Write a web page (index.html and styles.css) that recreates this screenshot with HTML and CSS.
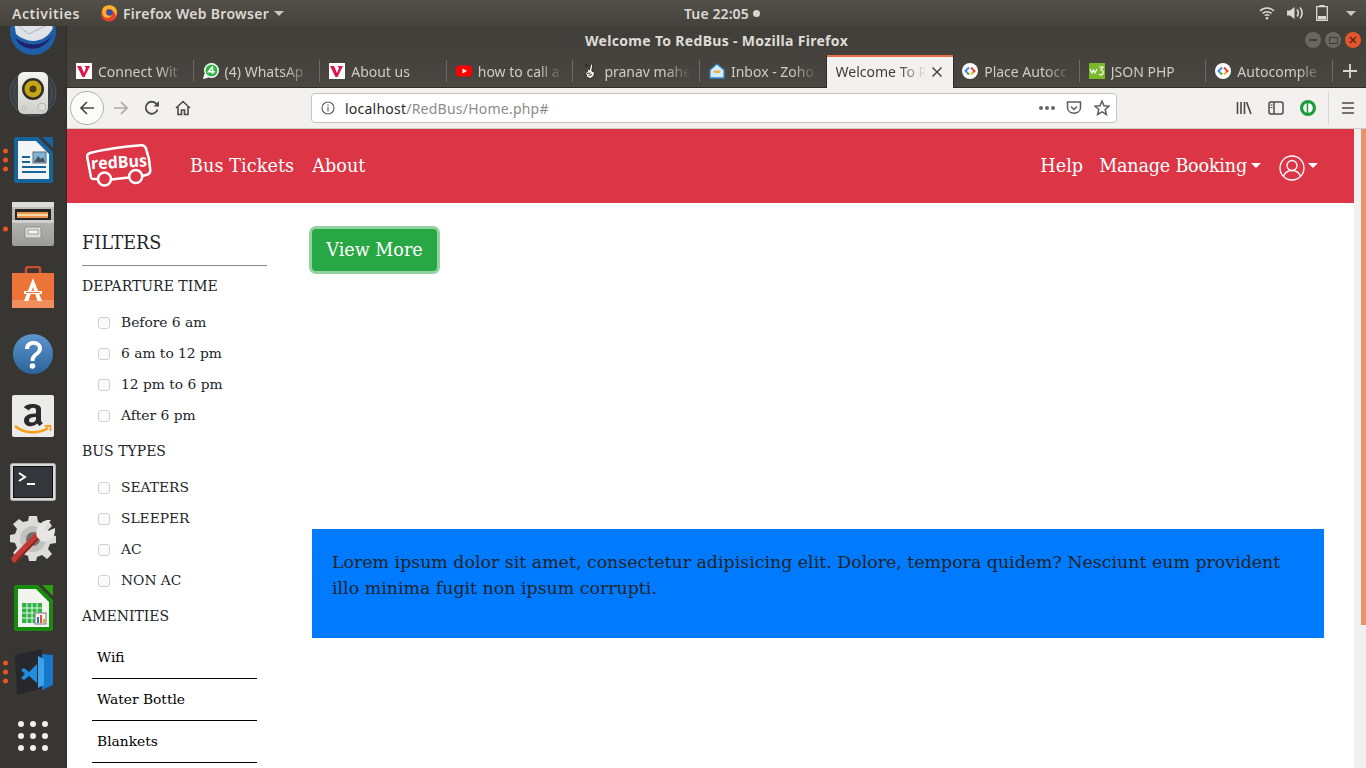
FILE: index.html
```html
<!DOCTYPE html>
<html lang="en">
<head>
<meta charset="utf-8">
<title>Welcome To RedBus</title>
<link rel="stylesheet" href="styles.css">
</head>
<body>
<header class="topbar">
  <div class="top-left">
    <span class="activities">Activities</span>
    <span class="app-menu">
      <svg class="ff" viewBox="0 0 18 18" width="18" height="18"><circle cx="9" cy="9.500" r="8" fill="#e8432f"/><path d="M3 4C5 1 11 0 14.500 3 17.500 5.500 17.500 10 16 12 15 8 12 5 9 5.500L7 4 8 6C6 6 5 7.500 6 9 7 11 11 11 12 9 12.500 12.500 9 15 5.500 13.500 2 12 1.500 7 3 4Z" fill="#ffb226"/><circle cx="9.500" cy="8.500" r="3.200" fill="#3b4ba8"/></svg>
      <span>Firefox Web Browser</span>
      <i class="caret-grey"></i>
    </span>
  </div>
  <div class="clock">Tue 22:05<i class="clock-dot"></i></div>
  <div class="top-right">
    <svg viewBox="0 0 16 14" width="16" height="14" fill="none" stroke="#dcd9d4" stroke-width="1.500"><path d="M1 5C5 1 11 1 15 5M3.500 7.500C6 5 10 5 12.500 7.500M5.800 9.800C7 8.700 9 8.700 10.200 9.800"/><circle cx="8" cy="12.200" r="1.300" fill="#dcd9d4" stroke="none"/></svg>
    <svg viewBox="0 0 17 14" width="17" height="14" fill="#dcd9d4"><path d="M0 4.500H3L7.500 1V13L3 9.500H0Z"/><path d="M10 3.500C11.500 5.500 11.500 8.500 10 10.500M13 1.500C15.700 4.500 15.700 9.500 13 12.500" fill="none" stroke="#dcd9d4" stroke-width="1.600"/></svg>
    <svg viewBox="0 0 12 16" width="12" height="16" fill="none" stroke="#dcd9d4" stroke-width="1.300"><path d="M4 1.500V.6H8V1.500M.7 1.700H11.300V15.300H.7Z"/><rect x="2" y="11" width="8" height="3.500" fill="#dcd9d4" stroke="none"/></svg>
    <i class="caret-grey caret-sys"></i>
  </div>
</header>

<div class="desktop">
  <nav class="dock">
    <div class="slot slot-first">
      <svg viewBox="0 0 48 48" width="48" height="48"><circle cx="24" cy="24" r="23" fill="#1f5fa8"/><path d="M6 30C14 44 34 46 44 26 36 38 20 40 6 30Z" fill="#20216b"/><path d="M4 8H38L44 20C36 36 18 36 7 26Z" fill="#dfe2e7"/><path d="M4 14L20 26 40 16" fill="none" stroke="#aeb3bb"/></svg>
    </div>
    <div class="slot">
      <svg viewBox="0 0 48 48" width="48" height="48"><defs><linearGradient id="spk" x1="0" y1="0" x2="0" y2="1"><stop offset="0" stop-color="#f4f4f0"/><stop offset="1" stop-color="#cfcfca"/></linearGradient></defs><circle cx="24" cy="21" r="23" fill="#3b3f44" stroke="#4a5560"/><circle cx="24" cy="21" r="19" fill="none" stroke="#4a5560"/><rect x="9" y="0" width="30" height="42" rx="6" fill="url(#spk)"/><circle cx="24" cy="17" r="11" fill="#2f2e2a"/><circle cx="24" cy="17" r="8.500" fill="#c6a516"/><circle cx="24" cy="17" r="3.500" fill="#47400f"/><circle cx="33" cy="35" r="4" fill="#dcdcd8" stroke="#b9b9b4"/><circle cx="15" cy="36" r="2" fill="#d5d5d0" stroke="#bbb"/></svg>
    </div>
    <div class="slot">
      <i class="pips"><b></b><b></b><b></b></i>
      <svg viewBox="0 0 41 48" width="41" height="48"><path d="M3 1H25L40 16V45A2 2 0 0 1 38 47H3A2 2 0 0 1 1 45V3A2 2 0 0 1 3 1Z" fill="#18639b"/><path d="M5 5H23L36 18V43H5Z" fill="#f2f4f5"/><path d="M29 1H40V12Z" fill="#18639b"/><path d="M9 20H17V22H9ZM9 25H17V27H9ZM9 30H33V32H9ZM9 35H33V37H9Z" fill="#18639b"/><rect x="20" y="16" width="13" height="11" fill="#7fb4d8" stroke="#5b6d78"/><path d="M21 26L25 20 28 23 30 21 32 26Z" fill="#48525a"/></svg>
    </div>
    <div class="slot">
      <i class="pips pips-one"><b></b></i>
      <svg viewBox="0 0 42 44" width="42" height="44"><defs><linearGradient id="cab" x1="0" y1="0" x2="0" y2="1"><stop offset="0" stop-color="#c3c3c1"/><stop offset="1" stop-color="#9c9c9a"/></linearGradient></defs><rect x="0" y="0" width="42" height="44" rx="2" fill="url(#cab)"/><rect x="0" y="0" width="42" height="5" fill="#dcdcda"/><rect x="3" y="7" width="36" height="12" fill="#252524"/><rect x="5" y="10" width="31" height="6" fill="#e8944f"/><rect x="5" y="12" width="31" height="2" fill="#f6d9a5"/><rect x="0" y="18" width="42" height="3" fill="#d0d0ce"/><rect x="13" y="25" width="16" height="11" rx="1" fill="#dcdcda" stroke="#8f8f8d"/><rect x="16" y="28" width="10" height="4" fill="#f4f4f3" stroke="#6f6f6d" stroke-width=".6"/></svg>
    </div>
    <div class="slot">
      <svg viewBox="0 0 42 44" width="42" height="44"><path d="M14 9V3A2 2 0 0 1 16 1H26A2 2 0 0 1 28 3V9" fill="none" stroke="#c9502a" stroke-width="2.500"/><path d="M0 7H42V42H0Z" fill="#ed7439"/><path d="M0 34H42V42H0Z" fill="#f28e5b"/><path d="M21 12L12 35H16.500L21 21 25.500 35H30Z" fill="#fff"/><rect x="12" y="25" width="18" height="3" fill="#fff"/><rect x="14" y="26" width="14" height="1" fill="#ed7439"/></svg>
    </div>
    <div class="slot slot-down">
      <svg viewBox="0 0 42 42" width="42" height="42"><defs><linearGradient id="hb" x1="0" y1="0" x2="0" y2="1"><stop offset="0" stop-color="#5d95cd"/><stop offset="1" stop-color="#2a649b"/></linearGradient></defs><circle cx="21" cy="21" r="20" fill="url(#hb)"/><path d="M13 16C13 5 30 6 30 15.500 30 22 22.500 22 22.500 28H18.500C18.500 20 26 20 26 15.500 26 10.500 17 10.500 17 16Z" fill="#fff"/><circle cx="20.500" cy="33" r="2.800" fill="#fff"/></svg>
    </div>
    <div class="slot">
      <svg viewBox="0 0 42 42" width="42" height="42"><rect width="42" height="42" rx="2" fill="#ebebe9"/><path d="M12 12.500C14 8 29 7.500 29 14V25C29 27 30 27.500 31 28L27.500 31 25 28.500C21 33 12 32 12 25.500 12 19 20 18.500 24 18.500V15C24 12 18 12 17 15.500ZM24 22C20 22 17 23 17 25.500 17 28.500 24 28 24 24Z" fill="#2b2b2b"/><path d="M3 31C12 39 27 39 36 33" fill="none" stroke="#f6a01a" stroke-width="2.500"/><path d="M33 31H38.500V36" fill="none" stroke="#f6a01a" stroke-width="1.800"/></svg>
    </div>
    <div class="slot slot-down">
      <svg viewBox="0 0 46 38" width="46" height="38"><rect x=".5" y=".5" width="45" height="37" rx="2" fill="#d7d7d5" stroke="#aaa"/><rect x="3" y="3" width="40" height="32" fill="#111"/><rect x="4" y="4" width="38" height="30" fill="#33363a"/><path d="M9 10L15 14 9 18" fill="none" stroke="#fff" stroke-width="2"/><rect x="17" y="20" width="8" height="2" fill="#fff"/></svg>
    </div>
    <div class="slot slot-up">
      <svg viewBox="0 0 46 52" width="46" height="52"><path d="M19 1H27L28 7 33 9 38 5 42 11 38 15 40 20 46 21V28L40 29 38 34 42 39 37 44 32 40 27 42 26 46H19L18 41 13 39 8 43 3 38 7 33 5 28 0 27V20L5 19 7 14 3 9 9 4 13 7 18 6Z" fill="#dcdcda"/><circle cx="23" cy="24" r="13" fill="#c2c2c0"/><circle cx="23" cy="24" r="7" fill="#6f6f6d"/><path d="M5 44L29 19" stroke="#bf3b33" stroke-width="7" stroke-linecap="round"/><path d="M5 44L29 19" stroke="#7e1f1a" stroke-width="1.400" stroke-linecap="round" transform="translate(1.500 2)"/><path d="M27 22C24 12 32 4 41 5L35 12 38 16 45 13C46 22 39 29 31 26Z" fill="#e6e6e4"/></svg>
    </div>
    <div class="slot">
      <svg viewBox="0 0 41 48" width="41" height="48"><path d="M3 1H25L40 16V45A2 2 0 0 1 38 47H3A2 2 0 0 1 1 45V3A2 2 0 0 1 3 1Z" fill="#188a0c"/><path d="M5 5H23L36 18V43H5Z" fill="#f2f4f0"/><path d="M29 1H40V12Z" fill="#2a9f11"/><rect x="9" y="19" width="20" height="20" fill="#2eb344"/><path d="M9 24H29M9 29H29M9 34H29M14 19V39M19 19V39M24 19V39" stroke="#e8f6e8"/><rect x="22" y="29" width="11" height="11" fill="#f4f4f2" stroke="#777"/><path d="M24 33H26V39H24Z" fill="#2a76c4"/><path d="M27 31H29V39H27Z" fill="#e0532b"/><path d="M30 35H32V39H30Z" fill="#e9a32c"/></svg>
    </div>
    <div class="slot">
      <i class="pips"><b></b><b></b><b></b></i>
      <svg viewBox="0 0 42 46" width="42" height="46"><path d="M3 6L30 0 30 5 41 6V36L32 39 5 46Z" fill="#26282e"/><path d="M30 5L41 6 41 36 30 41Z" fill="#1677cb"/><path d="M32 10V36L26 39V7Z" fill="#3ea2ea"/><path d="M9 21L12 19 17 23 25 15V34L17 27 12 31 9 29 13 25Z" fill="#1f8ee0"/></svg>
    </div>
    <div class="slot">
      <div class="apps"><b></b><b></b><b></b><b></b><b></b><b></b><b></b><b></b><b></b></div>
    </div>
  </nav>

  <div class="window">
    <div class="titlebar">
      <span class="win-title">Welcome To RedBus - Mozilla Firefox</span>
      <div class="win-btns">
        <span class="wb"><i class="wb-min"></i></span>
        <span class="wb"><i class="wb-max"></i></span>
        <span class="wb wb-close">
          <svg viewBox="0 0 8 8" width="8" height="8" stroke="#5e1d06" stroke-width="1.200"><path d="M1 1L7 7M7 1L1 7"/></svg>
        </span>
      </div>
    </div>

    <div class="tabs">
      <div class="tab">
        <svg class="fav" viewBox="0 0 16 16" width="16" height="16"><rect width="16" height="16" fill="#fff"/><path d="M1 3H5L8 10 10 5 8.500 3H14L8.500 14H6.500Z" fill="#e0144c"/></svg>
        <span class="tab-label">Connect Wit</span>
      </div>
      <div class="tab">
        <svg class="fav" viewBox="0 0 16 16" width="16" height="16"><circle cx="8.500" cy="7.500" r="7.500" fill="#fff"/><path d="M0 16L1.500 10.500 5.500 14.500Z" fill="#fff"/><circle cx="8.500" cy="7.500" r="6" fill="#2bb741"/><path d="M9.500 3.500V11M9.500 3.500L5.500 8.800H12" fill="none" stroke="#fff" stroke-width="1.500"/></svg>
        <span class="tab-label">(4) WhatsAp</span>
      </div>
      <div class="tab">
        <svg class="fav" viewBox="0 0 16 16" width="16" height="16"><rect width="16" height="16" fill="#fff"/><path d="M1 3H5L8 10 10 5 8.500 3H14L8.500 14H6.500Z" fill="#e0144c"/></svg>
        <span class="tab-label">About us</span>
      </div>
      <div class="tab">
        <svg class="fav" viewBox="0 0 16 16" width="16" height="16"><rect y="2.500" width="16" height="11" rx="3" fill="#f00"/><path d="M6.500 5.500L11 8 6.500 10.500Z" fill="#fff"/></svg>
        <span class="tab-label">how to call a</span>
      </div>
      <div class="tab">
        <svg class="fav" viewBox="0 0 16 16" width="16" height="16"><path d="M4 .8L7.300 7 8.800 .8 10.800 1.300 9.800 8 12.500 9.300 12 13 8.500 15.500 5 14.500 3.500 10 5.800 8Z" fill="#f3f3f0" stroke="#1a1a18" stroke-width=".9"/><path d="M5 10.500L8.500 10M6.500 12.500L10 11.500" stroke="#1a1a18" stroke-width=".9"/></svg>
        <span class="tab-label">pranav mahe</span>
      </div>
      <div class="tab">
        <svg class="fav" viewBox="0 0 16 16" width="16" height="16"><path d="M1 7L8 1 15 7V15H1Z" fill="#d8ebf8" stroke="#2d88c9" stroke-width="1.300"/><path d="M4 7.500H12L11 10H5Z" fill="#eeb24c"/></svg>
        <span class="tab-label">Inbox - Zoho</span>
      </div>
      <div class="tab tab-active">
        <span class="tab-label">Welcome To R</span>
        <svg class="tab-x" viewBox="0 0 10 10" width="10" height="10" stroke="#3c3c3a" stroke-width="1.400"><path d="M.5 .5L9.500 9.500M9.500 .5L.5 9.500"/></svg>
      </div>
      <div class="tab">
        <svg class="fav" viewBox="0 0 16 16" width="16" height="16"><circle cx="8" cy="8" r="8" fill="#fff"/><path d="M7 4.500L3.500 8 5 9.500" fill="none" stroke="#4285f4" stroke-width="2"/><path d="M9 4.500L12.500 8 11 9.500" fill="none" stroke="#ea4335" stroke-width="2"/><path d="M5 9.500L7 11.500" stroke="#34a853" stroke-width="2"/><path d="M11 9.500L9 11.500" stroke="#fbbc05" stroke-width="2"/></svg>
        <span class="tab-label">Place Autocc</span>
      </div>
      <div class="tab">
        <svg class="fav" viewBox="0 0 16 16" width="16" height="16"><rect width="16" height="16" fill="#7ab929"/><path d="M1 6L3 10 4.500 7 6 10 8 6" fill="none" stroke="#fff" stroke-width="1.200"/><path d="M10 4H14L12 7C14 7 14.500 9 14 10.500 13.500 12 11 12.500 10 11" fill="none" stroke="#fff" stroke-width="1.200"/></svg>
        <span class="tab-label">JSON PHP</span>
      </div>
      <div class="tab">
        <svg class="fav" viewBox="0 0 16 16" width="16" height="16"><circle cx="8" cy="8" r="8" fill="#fff"/><path d="M7 4.500L3.500 8 5 9.500" fill="none" stroke="#4285f4" stroke-width="2"/><path d="M9 4.500L12.500 8 11 9.500" fill="none" stroke="#ea4335" stroke-width="2"/><path d="M5 9.500L7 11.500" stroke="#34a853" stroke-width="2"/><path d="M11 9.500L9 11.500" stroke="#fbbc05" stroke-width="2"/></svg>
        <span class="tab-label">Autocomple</span>
      </div>
      <div class="tab-new">
        <svg viewBox="0 0 14 14" width="14" height="14" stroke="#d9d6d0" stroke-width="1.800"><path d="M7 0V14M0 7H14"/></svg>
      </div>
    </div>

    <div class="toolbar">
      <span class="back">
        <svg viewBox="0 0 16 16" width="16" height="16" fill="none" stroke="#4a4a48" stroke-width="1.700"><path d="M15 8H2M8 2L2 8 8 14"/></svg>
      </span>
      <svg class="tool fwd" viewBox="0 0 16 16" width="16" height="16" fill="none" stroke="#a9a9a7" stroke-width="1.700"><path d="M1 8H14M8 2L14 8 8 14"/></svg>
      <svg class="tool" viewBox="0 0 16 16" width="16" height="16" fill="none" stroke="#4a4a48" stroke-width="1.800"><path d="M13.500 9.500A6 6 0 1 1 12 3.500L14.500 6"/><path d="M15 1V6.500H9.500" fill="#4a4a48" stroke="none"/></svg>
      <svg class="tool" viewBox="0 0 16 16" width="16" height="16" fill="none" stroke="#4a4a48" stroke-width="1.600"><path d="M1 8L8 1.500 15 8M3 7V14.500H6.500V10H9.500V14.500H13V7"/></svg>
      <div class="urlbar">
        <svg viewBox="0 0 14 14" width="14" height="14" fill="none" stroke="#666" stroke-width="1.200"><circle cx="7" cy="7" r="6"/><path d="M7 6V10.500M7 3.500V5" /></svg>
        <span class="url"><span class="url-host">localhost</span>/RedBus/Home.php#</span>
        <span class="url-dots"><b></b><b></b><b></b></span>
        <svg viewBox="0 0 16 16" width="16" height="16" fill="none" stroke="#5d5d5b" stroke-width="1.500"><path d="M1.500 2H14.500V7.500C14.500 15 1.500 15 1.500 7.500Z"/><path d="M5 6.500L8 9.500 11 6.500"/></svg>
        <svg viewBox="0 0 16 16" width="16" height="16" fill="none" stroke="#5d5d5b" stroke-width="1.500"><path d="M8 1L10 5.800 15 6.200 11.200 9.500 12.400 14.500 8 11.800 3.600 14.500 4.800 9.500 1 6.200 6 5.800Z"/></svg>
      </div>
      <div class="tool-right">
        <svg viewBox="0 0 16 16" width="16" height="16" fill="none" stroke="#4a4a48" stroke-width="1.600"><path d="M1.500 2V14M5 2V14M8.500 2V14M10.500 2L15 14"/></svg>
        <svg viewBox="0 0 16 14" width="16" height="14" fill="none" stroke="#4a4a48" stroke-width="1.500"><rect x="1" y="1" width="14" height="12" rx="2"/><path d="M6 1V13" /><path d="M2.500 4H4.500M2.500 6.500H4.500" stroke-width="1"/></svg>
        <svg viewBox="0 0 16 16" width="16" height="16"><circle cx="8" cy="8" r="8" fill="#1e9b3c"/><circle cx="8" cy="8" r="4.800" fill="#fff"/><rect x="6.700" y="3" width="1.500" height="10" fill="#1e9b3c"/></svg>
        <i class="tool-sep"></i>
        <svg viewBox="0 0 12 12" width="12" height="12" stroke="#4a4a48" stroke-width="1.500"><path d="M0 1H12M0 6H12M0 11H12"/></svg>
      </div>
    </div>

    <div class="viewport">
      <div class="page">
        <div class="navbar">
          <svg class="logo" viewBox="0 0 66 44" width="66" height="44">
            <path d="M12 35H7C6 35 5.300 34.500 5 33.500L1.200 13C.9 10.500 1.800 9.500 4 9 20 5 38 2.500 55 1.300 57.500 1.100 59 2 60 4.500 62 10 64 20 64.300 26 64.400 29 63 30.500 60 31L56.500 32M43 33.500L25 35.500" fill="none" stroke="#fff" stroke-width="2.500"/>
            <circle cx="18.500" cy="35" r="6.500" fill="none" stroke="#fff" stroke-width="2.500"/>
            <circle cx="49.700" cy="32.500" r="6.500" fill="none" stroke="#fff" stroke-width="2.500"/>
            <text x="5" y="24" class="logo-text" textLength="56" lengthAdjust="spacingAndGlyphs" transform="rotate(-3 30 20)">redBus</text>
          </svg>
          <a class="nav-link">Bus Tickets</a>
          <a class="nav-link">About</a>
          <div class="nav-spacer"></div>
          <a class="nav-link nav-help">Help</a>
          <a class="nav-link nav-narrow">Manage Booking<i class="caret-white"></i></a>
          <span class="nav-user">
            <svg viewBox="0 0 26 26" width="26" height="26" fill="none" stroke="#fff" stroke-width="1.300"><circle cx="13" cy="13" r="12"/><circle cx="13" cy="10.500" r="5"/><path d="M4.500 21.500C6 17 9 15.500 13 15.500S20 17 21.500 21.500"/></svg>
            <i class="caret-white"></i>
          </span>
        </div>
        <div class="content">
          <aside class="filters">
            <h5 class="filters-title">FILTERS</h5>
            <hr class="filters-rule">
            <h6 class="group-title">DEPARTURE TIME</h6>
            <ul class="checks">
              <li><i class="box"></i>Before 6 am</li>
              <li><i class="box"></i>6 am to 12 pm</li>
              <li><i class="box"></i>12 pm to 6 pm</li>
              <li><i class="box"></i>After 6 pm</li>
            </ul>
            <h6 class="group-title">BUS TYPES</h6>
            <ul class="checks">
              <li><i class="box"></i>SEATERS</li>
              <li><i class="box"></i>SLEEPER</li>
              <li><i class="box"></i>AC</li>
              <li><i class="box"></i>NON AC</li>
            </ul>
            <h6 class="group-title">AMENITIES</h6>
            <ul class="amenities">
              <li>Wifi</li>
              <li>Water Bottle</li>
              <li>Blankets</li>
            </ul>
          </aside>
          <main class="main">
            <button class="view-more" type="button">View More</button>
            <div class="alert">Lorem ipsum dolor sit amet, consectetur adipisicing elit. Dolore, tempora quidem? Nesciunt eum provident illo minima fugit non ipsum corrupti.</div>
          </main>
        </div>
      </div>
      <div class="scrollbar"><i class="thumb"></i></div>
    </div>
  </div>
</div>
</body>
</html>
```

FILE: styles.css
```css
* { box-sizing: border-box; }
html, body { margin: 0; height: 100%; overflow: hidden; }
body { width: 1366px; height: 768px; font-family: "Noto Sans", sans-serif; background: #3a3835; }
i, b { display: block; font-style: normal; }
svg { display: block; flex: none; }

.topbar {
  height: 26px; display: flex; align-items: center;
  background: linear-gradient(#53504a, #45423c); color: #dcd9d4; font-size: 14px; font-weight: 600;
}
.top-left { display: flex; align-items: center; padding-left: 12px; width: 684px; flex: none; }
.activities { width: 88px; letter-spacing: .55px; }
.app-menu { display: flex; align-items: center; gap: 5px; letter-spacing: .3px; }
.caret-grey { width: 0; height: 0; border-left: 5px solid transparent; border-right: 5px solid transparent; border-top: 5px solid #c9c6c1; }
.clock { display: flex; align-items: center; gap: 4px; letter-spacing: .1px; }
.clock-dot { width: 7px; height: 7px; border-radius: 50%; background: #d9d6d2; }
.top-right { flex: 1; display: flex; align-items: center; justify-content: flex-end; gap: 12px; padding-right: 10px; }
.caret-sys { margin-left: 6px; }

.desktop { display: flex; height: 742px; }

.dock { width: 67px; height: 742px; overflow: hidden; background: #383633; border-right: 1px solid #2e2c2a; flex: none; }
.slot { height: 64px; display: flex; align-items: center; justify-content: center; position: relative; }
.slot-first { margin-top: -26px; }
.slot-down svg { margin-top: 3px; }
.slot-up svg { margin-top: -6px; }
.pips { position: absolute; left: 3px; top: 50%; transform: translateY(-50%); display: flex; flex-direction: column; gap: 4px; }
.pips b { width: 5px; height: 5px; border-radius: 50%; background: #e95420; }
.pips-one { top: 58%; }
.apps { display: grid; grid-template-columns: repeat(3, 6px); gap: 6px; }
.apps b { width: 6px; height: 6px; border-radius: 50%; background: #efefed; }

.window { width: 1299px; display: flex; flex-direction: column; }
.titlebar {
  height: 29px; display: flex; align-items: center; justify-content: center; position: relative;
  background: linear-gradient(#403e38, #45423d); color: #dfdcd7; font-size: 14px; font-weight: 700;
}
.win-title { letter-spacing: .32px; }
.win-btns { position: absolute; right: 5px; top: 6px; display: flex; gap: 4px; }
.wb { width: 16px; height: 16px; border-radius: 50%; background: #6a6762; display: flex; align-items: center; justify-content: center; }
.wb-close { background: #e0562a; }
.wb-min { width: 8px; height: 2px; background: #3e3c38; }
.wb-max { width: 9px; height: 7px; border: 1.500px solid #3e3c38; }

.tabs { height: 33px; display: flex; background: linear-gradient(#45423d, #4a4741); border-bottom: 1px solid #2f2d2a; }
.tab {
  width: 126.600px; height: 32px; display: flex; align-items: center; gap: 6px; padding: 0 9px;
  color: #cfccc6; font-size: 14px; position: relative;
}
.tab::after { content: ""; position: absolute; right: 0; top: 5px; bottom: 5px; width: 1px; background: #6d6a64; }
.tab-label { flex: 1; white-space: nowrap; overflow: hidden; -webkit-mask-image: linear-gradient(90deg, #000 70%, transparent); mask-image: linear-gradient(90deg, #000 70%, transparent); }
.tab-active { background: #f2f1ef; color: #3d3d3b; border-top: 2px solid #e9704b; height: 33px; padding-right: 11px; padding-bottom: 2px; box-shadow: -1px 0 #2f2d2a, 1px 0 #2f2d2a; z-index: 1; }
.tab-active::after { display: none; }
.tab-new { flex: 1; display: flex; align-items: center; justify-content: center; padding-left: 2px; }

.toolbar { height: 41px; flex: none; display: flex; align-items: center; background: #f2f1ef; border-bottom: 1px solid #cfcdc9; padding-left: 3px; }
.back { width: 34px; height: 34px; border-radius: 50%; border: 1px solid #b1b1af; background: #fbfbfa; display: flex; align-items: center; justify-content: center; }
.fwd { margin-left: 9px; }
.fwd + .tool { margin-left: 15px; }
.fwd + .tool + .tool { margin-left: 15px; }
.urlbar {
  width: 806px; height: 30px; margin-left: 120px; display: flex; align-items: center; padding: 0 6px 0 9px;
  background: #fff; border: 1px solid #c5c4c1; border-radius: 4px; font-size: 14px; color: #8c8c8a;
}
.url { flex: 1; padding-left: 10px; white-space: nowrap; letter-spacing: .23px; }
.url-host { color: #2b2b2b; }
.url-dots { display: flex; gap: 2px; margin-right: 11px; }
.url-dots b { width: 4px; height: 4px; border-radius: 50%; background: #666; }
.urlbar svg:last-child { margin-left: 12px; }
.tool-right { display: flex; align-items: center; gap: 16px; margin-left: 119px; }
.tool-sep { width: 1px; height: 32px; background: #d9d7d3; margin: 0 -3px 0 -4px; }

.viewport { flex: 1; display: flex; min-height: 0; }
.page { width: 1287px; background: #fff; overflow: hidden; font-family: "DejaVu Serif", serif; color: #212529; }
.scrollbar { width: 12px; background: #f1f0ee; padding-left: 7px; }
.thumb { width: 5px; height: 496px; background: #f0906c; }

.navbar { height: 74px; background: #dc3545; display: flex; align-items: center; padding: 0 36px 0 19px; }
.logo { margin-right: 38px; }
.logo-text { font-family: "Open Sans", sans-serif; font-weight: 700; font-size: 16.500px; fill: #fff; }
.nav-link { color: #fff; font-size: 17.600px; line-height: 26px; display: flex; align-items: center; margin-right: 18px; white-space: nowrap; letter-spacing: .08px; }
.nav-help { margin-right: 16px; }
.nav-narrow { letter-spacing: -.2px; }
.nav-spacer { flex: 1; }
.caret-white { width: 0; height: 0; margin-left: 4px; margin-top: -2px; border-left: 5px solid transparent; border-right: 5px solid transparent; border-top: 5px solid #fff; }
.nav-user { display: flex; align-items: center; }
.nav-user svg { margin-top: 3px; }
.nav-user .caret-white { margin-left: 3px; }

.content { display: flex; }
.filters { width: 215px; padding: 27px 15px 0 15px; flex: none; }
.filters-title { margin: 0; font-size: 17.600px; font-weight: 400; line-height: 26px; }
.filters-rule { margin: 9px 0 0 0; border: 0; border-top: 1px solid #8a8a8a; width: 185px; }
.group-title { margin: 10px 0 0; font-size: 14px; font-weight: 400; line-height: 20px; }
.checks + .group-title { margin-top: 11px; }
.checks { list-style: none; margin: 10px 0 0; padding: 0 0 0 16px; }
.checks li { height: 31px; display: flex; align-items: center; font-size: 13.800px; }
.box { width: 12px; height: 12px; border: 1px solid #cfcfcd; border-radius: 3px; background: #fbfbfb; margin-right: 11px; margin-top: 2px; }
.amenities { list-style: none; margin: 11px 0 0; padding: 0 0 0 10px; }
.amenities li { width: 165px; height: 42px; padding: 0 0 2px 5px; display: flex; align-items: center; font-size: 13.800px; color: #000; border-bottom: 1px solid #000; }

.main { flex: 1; padding: 26px 30px 0 30px; }
.view-more {
  display: block; font: 17.600px/26px "DejaVu Serif", serif; color: #fff; background: #28a745; border: 0; padding: 0;
  height: 42px; width: 125px; border-radius: 4px; white-space: nowrap; box-shadow: 0 0 0 3px rgba(40, 167, 69, .5);
}
.alert { margin-top: 258px; height: 109px; padding: 20px; background: #007bff; color: #212529; font-size: 17.390px; line-height: 26px; }
```
